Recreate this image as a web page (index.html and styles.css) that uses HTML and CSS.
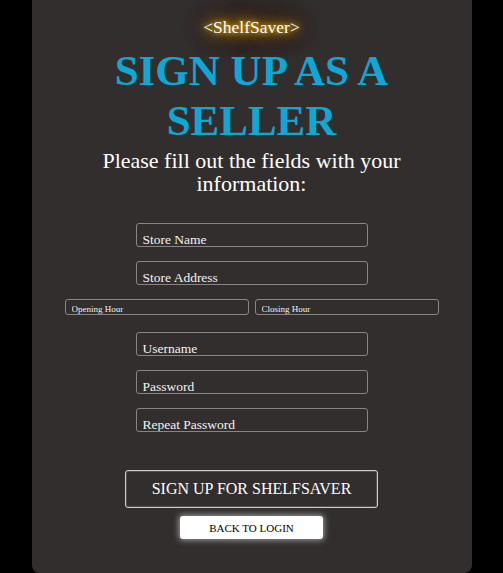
FILE: index.html
```
<!DOCTYPE html>
<html>
<head>
<meta charset="utf-8">
<link rel="stylesheet" href="styles.css">
</head>
<body>
<div class="card">
  <div class="logo">&lt;ShelfSaver&gt;</div>
  <h1 class="title">SIGN UP AS A SELLER</h1>
  <p class="subtitle">Please fill out the fields with your information:</p>
  <form class="form">
    <input class="field" placeholder="Store Name">
    <input class="field" placeholder="Store Address">
    <div class="hours">
      <input class="field small" placeholder="Opening Hour">
      <input class="field small" placeholder="Closing Hour">
    </div>
    <input class="field" placeholder="Username">
    <input class="field" placeholder="Password">
    <input class="field" placeholder="Repeat Password">
    <button type="button" class="signup">SIGN UP FOR SHELFSAVER</button>
    <button type="button" class="back">BACK TO LOGIN</button>
  </form>
</div>
</body>
</html>
```
FILE: styles.css
```
html, body {
  margin: 0;
  padding: 0;
  background: #000;
  height: 100%;
}
body {
  font-family: "Liberation Serif", "Times New Roman", serif;
}
.card {
  width: 440px;
  margin: 0 auto;
  min-height: 573px;
  background: #332e2e;
  border-radius: 0 0 8px 8px;
  display: flex;
  flex-direction: column;
  align-items: center;
  box-sizing: border-box;
  padding-top: 15px;
}
.logo {
  color: #fff;
  font-size: 17.5px;
  line-height: 24px;
  padding: 0 4px;
  text-shadow: 0 0 5px #f0b414, 0 0 10px #d89c10, 0 0 16px #c08a0c, 0 0 24px #a07408, 0 0 32px #6e5006;
}
.title {
  margin: 7px 0 0;
  color: #0fa8d5;
  font-size: 43px;
  line-height: 50px;
  font-weight: bold;
  text-align: center;
  width: 300px;
}
.subtitle {
  margin: 3px 0 0;
  color: #fff;
  font-size: 22px;
  line-height: 23px;
  text-align: center;
  width: 310px;
}
.form {
  display: flex;
  flex-direction: column;
  align-items: center;
  margin-top: 28px;
  width: 100%;
}
.field {
  width: 232px;
  height: 24px;
  box-sizing: border-box;
  background: transparent;
  border: 1px solid #8a8585;
  border-radius: 3px;
  color: #fff;
  font-family: "Liberation Serif", "Times New Roman", serif;
  font-size: 13.5px;
  padding: 9px 6px 0;
  margin: 0 0 14px;
  outline: none;
}
.field::placeholder {
  color: #f2f2f2;
  opacity: 1;
}
.hours {
  display: flex;
  gap: 6px;
  width: 374px;
  margin-bottom: 3px;
}
.field.small {
  width: 184px;
  height: 16px;
  font-size: 9px;
  padding: 3px 6px 0;
  margin: 0 0 14px;
}
.signup {
  margin-top: 24px;
  width: 253px;
  height: 38px;
  background: transparent;
  border: 1px solid #d0cccc;
  border-radius: 3px;
  box-shadow: inset 0 0 0 1px #55504f;
  color: #fff;
  font-family: "Liberation Serif", "Times New Roman", serif;
  font-size: 16px;
  padding: 0;
}
.back {
  margin-top: 8px;
  width: 143px;
  height: 23px;
  background: #fff;
  border: none;
  border-radius: 3px;
  box-shadow: 0 0 6px 1px rgba(255,255,255,0.55);
  color: #000;
  font-family: "Liberation Serif", "Times New Roman", serif;
  font-size: 11px;
  padding: 0;
}
```
